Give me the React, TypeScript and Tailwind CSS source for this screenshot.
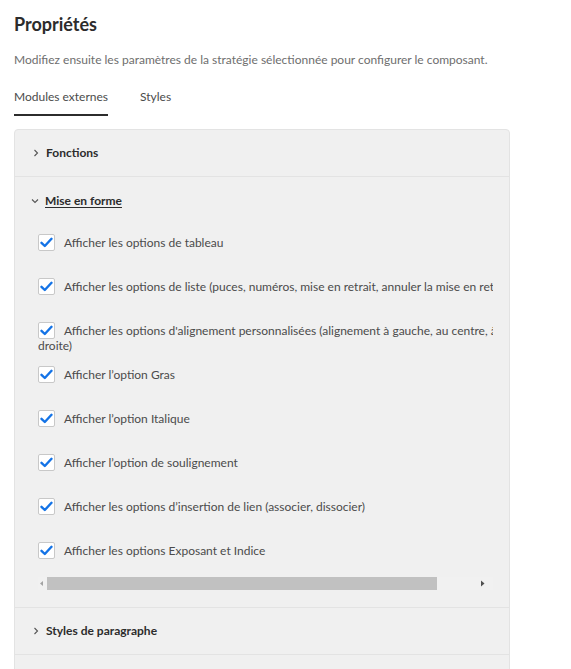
import React from "react";

const font = { fontFamily: "Lato, 'Noto Sans', sans-serif" };

function Check() {
  return (
    <span className="inline-flex h-[17px] w-[17px] shrink-0 items-center justify-center rounded-[2px] border border-[#c8c8c8] bg-white align-middle">
      <svg width="13" height="11" viewBox="0 0 13 11">
        <path d="M1.5 5.8 L4.8 9 L11.5 1.8" fill="none" stroke="#1473e6" strokeWidth="2.4" strokeLinecap="round" strokeLinejoin="round" />
      </svg>
    </span>
  );
}

function Chevron({ open }: { open?: boolean }) {
  return open ? (
    <svg width="8" height="6" viewBox="0 0 8 6" className="mr-[6px]">
      <path d="M1 1.5 L4 4.5 L7 1.5" fill="none" stroke="#555" strokeWidth="1.1" />
    </svg>
  ) : (
    <svg width="6" height="8" viewBox="0 0 6 8" className="mr-[7px]">
      <path d="M1.5 1 L4.5 4 L1.5 7" fill="none" stroke="#555" strokeWidth="1.1" />
    </svg>
  );
}

const items = [
  "Afficher les options de tableau",
  "Afficher les options de liste (puces, numéros, mise en retrait, annuler la mise en retrait)",
];

export default function App() {
  return (
    <div className="min-h-[669px] w-[571px] bg-white" style={font}>
      <div className="px-[14px] pt-[12px]">
        <h1 className="text-[18px] font-bold leading-[24px] text-[#2c2c2c]">Propriétés</h1>
        <p className="mt-[15px] text-[12px] leading-[18px] text-[#6e6e6e]">
          Modifiez ensuite les paramètres de la stratégie sélectionnée pour configurer le composant.
        </p>
        <div className="mt-[19px] flex text-[12px] text-[#4b4b4b]">
          <div className="flex flex-col">
            <span className="leading-[18px]">Modules externes</span>
            <span className="mt-[8px] h-[2px] bg-[#2c2c2c]" />
          </div>
          <span className="ml-[32px] leading-[18px]">Styles</span>
        </div>
        <div className="mt-[13px] w-[496px] rounded-t-[4px] border border-[#e3e3e3] bg-[#f0f0f0]">
          <div className="flex h-[47px] items-center border-b border-[#e3e3e3] pl-[18px] text-[12px] font-bold text-[#2c2c2c]">
            <Chevron />
            Fonctions
          </div>
          <div className="border-b border-[#e3e3e3] pl-[16px] pr-[16px]">
            <div className="flex h-[47px] items-center text-[12px] font-bold text-[#2c2c2c]">
              <Chevron open />
              <span className="underline underline-offset-2">Mise en forme</span>
            </div>
            <div className="ml-[7px] w-[455px] overflow-hidden text-[12px] text-[#4b4b4b]">
              <div className="pt-[10px]">
                <div className="flex h-[17px] items-center whitespace-nowrap">
                  <Check />
                  <span className="ml-[9px]">{items[0]}</span>
                </div>
                <div className="mt-[27px] flex h-[17px] items-center whitespace-nowrap">
                  <Check />
                  <span className="ml-[9px]">{items[1]}</span>
                </div>
                <div className="mt-[27px] leading-[16px]">
                  <div className="flex h-[17px] items-center whitespace-nowrap">
                    <Check />
                    <span className="ml-[9px]">Afficher les options d'alignement personnalisées (alignement à gauche, au centre, à</span>
                  </div>
                  <div className="leading-[14px]">droite)</div>
                </div>
                {[
                  "Afficher l’option Gras",
                  "Afficher l’option Italique",
                  "Afficher l’option de soulignement",
                  "Afficher les options d’insertion de lien (associer, dissocier)",
                  "Afficher les options Exposant et Indice",
                ].map((t, i) => (
                  <div key={t} className={`${i === 0 ? "mt-[13px]" : "mt-[27px]"} flex h-[17px] items-center whitespace-nowrap`}>
                    <Check />
                    <span className="ml-[9px]">{t}</span>
                  </div>
                ))}
              </div>
              <div className="mt-[18px] mb-[17px] flex h-[13px] items-center bg-[#f1f1f1]">
                <svg width="9" height="13" viewBox="0 0 9 13" className="shrink-0">
                  <path d="M5 4 L2 6.5 L5 9 Z" fill="#a3a3a3" />
                </svg>
                <div className="h-[13px] w-[390px] bg-[#c1c1c1]" />
                <div className="flex flex-1 justify-end pr-[6px]">
                  <svg width="9" height="13" viewBox="0 0 9 13">
                    <path d="M3 3.5 L6.5 6.5 L3 9.5 Z" fill="#505050" />
                  </svg>
                </div>
              </div>
            </div>
          </div>
          <div className="flex h-[47px] items-center border-b border-[#e3e3e3] pl-[18px] text-[12px] font-bold text-[#2c2c2c]">
            <Chevron />
            Styles de paragraphe
          </div>
          <div className="h-[20px]" />
        </div>
      </div>
    </div>
  );
}
